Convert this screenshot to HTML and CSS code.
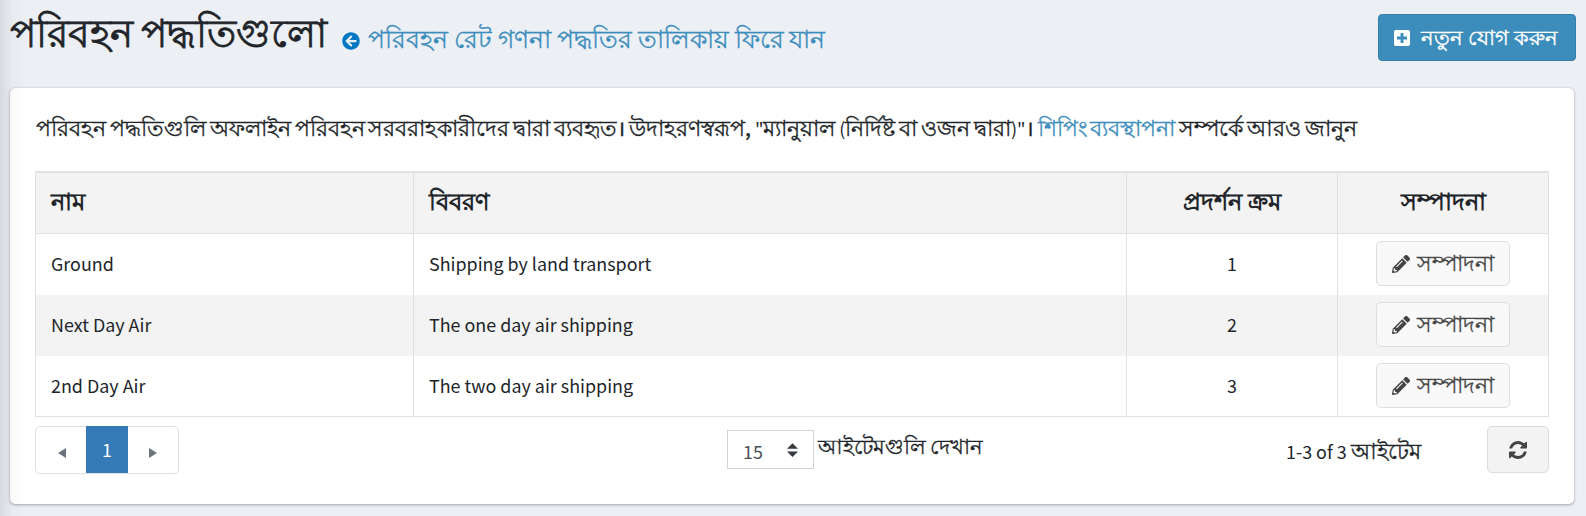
FILE: index.html
```html
<!DOCTYPE html>
<html lang="bn">
<head>
<meta charset="utf-8">
<title>পরিবহন পদ্ধতিগুলো</title>
<link rel="stylesheet" href="styles.css">
</head>
<body>
<svg class="symbols" aria-hidden="true">
  <symbol id="pencil" viewBox="0 0 512 512"><path fill="currentColor" d="M497.900 142.100l-46.100 46.100c-4.700 4.700-12.300 4.700-17 0l-111-111c-4.700-4.700-4.700-12.300 0-17l46.100-46.100c18.700-18.700 49.100-18.700 67.900 0l60.100 60.100c18.800 18.700 18.800 49.100 0 67.900zM284.200 99.800L21.600 362.400.4 483.900c-2.900 16.400 11.400 30.600 27.800 27.800l121.500-21.300 262.600-262.600c4.700-4.700 4.700-12.300 0-17l-111-111c-4.800-4.700-12.400-4.700-17.100 0zM124.100 339.900c-5.500-5.500-5.500-14.300 0-19.800l154-154c5.500-5.500 14.300-5.500 19.800 0s5.500 14.300 0 19.800l-154 154c-5.500 5.500-14.300 5.500-19.800 0zM88 424h48v36.300l-64.500 11.300-31.100-31.100L51.700 376H88v48z"/></symbol>
</svg>
<header class="content-header">
  <h1 class="title">পরিবহন পদ্ধতিগুলো</h1>
  <div class="back">
    <svg class="back-icon" viewBox="0 0 512 512"><path fill="currentColor" d="M256 504C119 504 8 393 8 256S119 8 256 8s248 111 248 248-111 248-248 248zm28.900-143.600L209.400 288H392c13.300 0 24-10.700 24-24v-16c0-13.300-10.700-24-24-24H209.400l75.500-72.400c9.700-9.300 9.900-24.800.4-34.300l-11-10.900c-9.400-9.400-24.600-9.400-33.900 0L107.700 239c-9.400 9.400-9.400 24.600 0 33.900l132.700 132.700c9.400 9.400 24.600 9.400 33.900 0l11-10.900c9.500-9.500 9.300-25-.4-34.300z"/></svg>
    <a class="back-link">পরিবহন রেট গণনা পদ্ধতির তালিকায় ফিরে যান</a>
  </div>
  <button class="add">
    <svg class="add-icon" viewBox="0 0 448 448"><path fill="currentColor" fill-rule="evenodd" d="M48 0h352a48 48 0 0 1 48 48v352a48 48 0 0 1-48 48H48a48 48 0 0 1-48-48V48A48 48 0 0 1 48 0zm136 84v100H84v80h100v100h80V264h100v-80H264V84z"/></svg>
    <span class="add-text">নতুন যোগ করুন</span>
  </button>
</header>
<main class="card">
  <p class="intro">পরিবহন পদ্ধতিগুলি অফলাইন পরিবহন সরবরাহকারীদের দ্বারা ব্যবহৃত। উদাহরণস্বরূপ, <i>"</i>ম্যানুয়াল <i>(</i>নির্দিষ্ট বা ওজন দ্বারা<i>)"</i>। <a>শিপিং ব্যবস্থাপনা</a> সম্পর্কে আরও জানুন</p>
  <div class="grid">
    <div class="row head"><span>নাম</span><span>বিবরণ</span><span>প্রদর্শন ক্রম</span><span>সম্পাদনা</span></div>
    <div class="row"><span>Ground</span><span>Shipping by land transport</span><span>1</span><span><button class="edit"><svg><use href="#pencil"/></svg><b>সম্পাদনা</b></button></span></div>
    <div class="row alt"><span>Next Day Air</span><span>The one day air shipping</span><span>2</span><span><button class="edit"><svg><use href="#pencil"/></svg><b>সম্পাদনা</b></button></span></div>
    <div class="row"><span>2nd Day Air</span><span>The two day air shipping</span><span>3</span><span><button class="edit"><svg><use href="#pencil"/></svg><b>সম্পাদনা</b></button></span></div>
  </div>
  <footer class="footer">
    <nav class="pages">
      <span class="arrow"><svg viewBox="0 0 8 10"><path fill="currentColor" d="M8 0v10L0 5z"/></svg></span>
      <span class="current">1</span>
      <span class="arrow"><svg viewBox="0 0 8 10"><path fill="currentColor" d="M0 0v10l8-5z"/></svg></span>
    </nav>
    <div class="length">
      <span class="select"><span>15</span><svg viewBox="0 0 4 5"><path fill="#343a40" d="M2 0L0 2h4zm0 5L0 3h4z"/></svg></span>
      <span class="length-text">আইটেমগুলি দেখান</span>
    </div>
    <div class="info"><span>1-3 of 3</span><span class="info-text">আইটেম</span></div>
    <button class="refresh"><svg viewBox="0 0 1536 1536"><path fill="currentColor" d="M1511 928q0 5-1 7-64 268-268 434.500T764 1536q-146 0-282.500-55T238 1324l-129 129q-19 19-45 19t-45-19-19-45V960q0-26 19-45t45-19h448q26 0 45 19t19 45-19 45l-137 137q71 66 161 102t187 36q134 0 250-65t186-179q11-17 53-117 8-23 30-23h192q13 0 22.500 9.500t9.500 22.500zm25-800v448q0 26-19 45t-45 19h-448q-26 0-45-19t-19-45 19-45l138-138Q969 256 768 256q-134 0-250 65T332 500q-11 17-53 117-8 23-30 23H50q-13 0-22.500-9.500T18 608v-7q65-268 270-434.500T768 0q146 0 284 55.500T1297 212l130-129q19-19 45-19t45 19 19 45z"/></svg></button>
  </footer>
</main>
</body>
</html>
```

FILE: styles.css
```css
* { box-sizing: border-box; }
body {
  margin: 0;
  height: 516px;
  overflow: hidden;
  background: #ecf0f5;
  color: #212529;
  font-family: "Noto Sans CJK SC", "Noto Sans", sans-serif;
  font-size: 17.900px;
}
/* Shadow cast by the neighbouring sidebar */
body::after {
  content: "";
  position: absolute;
  top: 0;
  left: 0;
  width: 28px;
  height: 516px;
  background: linear-gradient(90deg, rgba(0,0,0,.09), rgba(0,0,0,.02) 45%, transparent);
}
button { font: inherit; margin: 0; padding: 0; }
svg { display: block; flex: none; }
.symbols { position: absolute; width: 0; height: 0; }
.content-header {
  display: flex;
  align-items: flex-start;
  height: 88px;
  padding: 14px 10px 0;
}
.title {
  margin: 0;
  width: 332px;
  font-size: 39px;
  font-weight: 400;
  line-height: 32px;
  white-space: nowrap;
  word-spacing: -1px;
  -webkit-text-stroke: .8px currentColor;
}
.back { display: flex; padding-top: 6px; color: #3c8dbc; white-space: nowrap; }
.back-icon { width: 18px; height: 18px; margin: 12px 8px 0 0; color: #0077c2; }
.back-link { font-size: 25px; line-height: 34px; word-spacing: .3px; -webkit-text-stroke: .3px currentColor; }
.add {
  display: flex;
  align-items: flex-start;
  width: 198px;
  height: 47px;
  margin-left: auto;
  padding: 15px 15px 0;
  border: 1px solid #367fa9;
  border-radius: 4px;
  background: #3c8dbc;
  color: #fff;
  white-space: nowrap;
}
.add-icon { width: 16px; height: 16px; margin-right: 11px; }
.add-text { margin-top: -9px; font-size: 21.400px; line-height: 30px; -webkit-text-stroke: .4px currentColor; }
.card {
  width: 1564px;
  height: 416px;
  margin-left: 10px;
  padding: 0 25px;
  border-radius: 5px;
  background: #fff;
  box-shadow: 0 0 1px rgba(0,0,0,.25), 0 1px 3px rgba(0,0,0,.3);
}
.intro {
  height: 83px;
  margin: 0;
  padding: 24px 0 0 1px;
  font-size: 21.600px;
  line-height: 30px;
  white-space: nowrap;
  word-spacing: -1px;
  -webkit-text-stroke: .35px currentColor;
}
.intro a { color: #3c8dbc; }
.intro i { font-size: 18px; font-style: normal; -webkit-text-stroke: 0; }
.grid { border: 1px solid #e1e1e1; border-top-width: 2px; height: 246px; }
.row { display: grid; grid-template-columns: 378px 713px 211px 1fr; height: 61px; }
.row > span { padding: 0 15px; line-height: 59px; border-right: 1px solid #e1e1e1; }
.row > span:last-child { border-right: 0; }
.row > span:nth-child(n+3) { text-align: center; }
.head { background: #f3f3f3; border-bottom: 1px solid #e1e1e1; font-size: 23.500px; font-weight: 700; }
.row.head > span { height: 60px; line-height: 54px; }
.alt { background: #f3f3f3; }
.edit {
  display: flex;
  width: 134px;
  height: 45px;
  margin: 7px auto 0;
  padding: 13px 0 0 15px;
  border: 1px solid #ddd;
  border-radius: 5px;
  background: #f9f9f9;
  color: #444;
  line-height: 28px;
  white-space: nowrap;
}
.edit svg { width: 18px; height: 18px; margin-right: 7px; }
.edit b { margin-top: -7px; font-size: 21.800px; font-weight: 400; -webkit-text-stroke: .3px currentColor; }
.footer { display: grid; grid-template-columns: 692px 525px 235px 62px; padding-top: 9px; }
.pages { display: flex; width: 144px; height: 48px; border: 1px solid #dee2e6; border-radius: 5px; }
.arrow { width: 50px; padding: 21px 0 0 22px; color: #6c757d; }
.arrow:last-child { padding-left: 21px; }
.arrow svg { width: 8px; height: 10px; }
.current {
  width: 42px;
  height: 47px;
  margin-top: -1px;
  background: #337ab7;
  color: #fff;
  text-align: center;
  line-height: 47px;
}
.length { display: flex; padding-top: 4px; }
.select {
  display: flex;
  justify-content: space-between;
  width: 87px;
  height: 39px;
  padding: 0 15px;
  border: 1px solid #ced4da;
  color: #495057;
  line-height: 40px;
}
.select svg { width: 11px; height: 14px; margin-top: 12px; }
.length-text { margin-left: 4px; font-size: 21.400px; line-height: 29px; word-spacing: -1px; -webkit-text-stroke: .35px currentColor; }
.info { display: flex; padding-left: 34px; white-space: nowrap; line-height: 50px; }
.info-text { margin-left: 4px; font-size: 22px; line-height: 46px; -webkit-text-stroke: .35px currentColor; }
.refresh { display: grid; place-items: center; width: 62px; height: 47px; border: 1px solid #ddd; border-radius: 5px; background: #f3f3f3; color: #444; }
.refresh svg { width: 18px; height: 18px; }
```
